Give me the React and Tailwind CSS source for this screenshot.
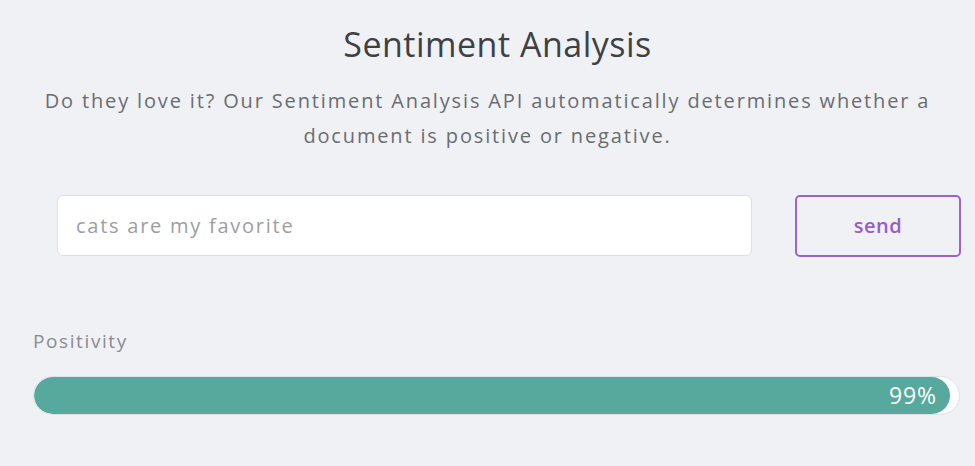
import React from "react";

const App = () => {
  const score = 99;
  return (
    <div className="min-h-[466px] w-full bg-[#f0f1f5] font-['Open_Sans',sans-serif] overflow-hidden">
      <div className="flex flex-col items-center pt-[20px]">
        <h1 className="pl-[20px] text-[34px] leading-[48px] text-[#3e4144] tracking-[0.5px]">Sentiment Analysis</h1>
        <p className="mt-[15px] w-[900px] text-center text-[20px] leading-[35px] text-[#6a6d70] tracking-[1.85px]">
          Do they love it? Our Sentiment Analysis API automatically determines whether a document is positive or negative.
        </p>
      </div>

      <div className="mt-[42px] flex gap-[43px] pl-[57px]">
        <div className="w-[695px] h-[61px] bg-white border border-[#dcdee2] rounded-[6px] flex items-center px-[18px]">
          <span className="text-[20px] text-[#9c9ea2] tracking-[1.75px]">cats are my favorite</span>
        </div>
        <button className="w-[166px] h-[62px] border-2 border-[#9d62cc] rounded-[5px] text-[20px] font-semibold text-[#9a5cc8] tracking-[0.5px]">
          send
        </button>
      </div>

      <div className="mt-[71px] px-[33px]">
        <div className="text-[19px] leading-[27px] text-[#898c8f] tracking-[1.6px]">Positivity</div>
        <div className="mt-[21px] w-[927px] h-[39px] rounded-full bg-white border border-[#dfe0e4] overflow-hidden">
          <div
            className="h-full rounded-full bg-[#56a99c] flex items-center justify-end pr-[13px]"
            style={{ width: `${score}%` }}
          >
            <span className="text-[23px] text-white tracking-[0.8px]">{score}%</span>
          </div>
        </div>
      </div>
    </div>
  );
};

export default App;
